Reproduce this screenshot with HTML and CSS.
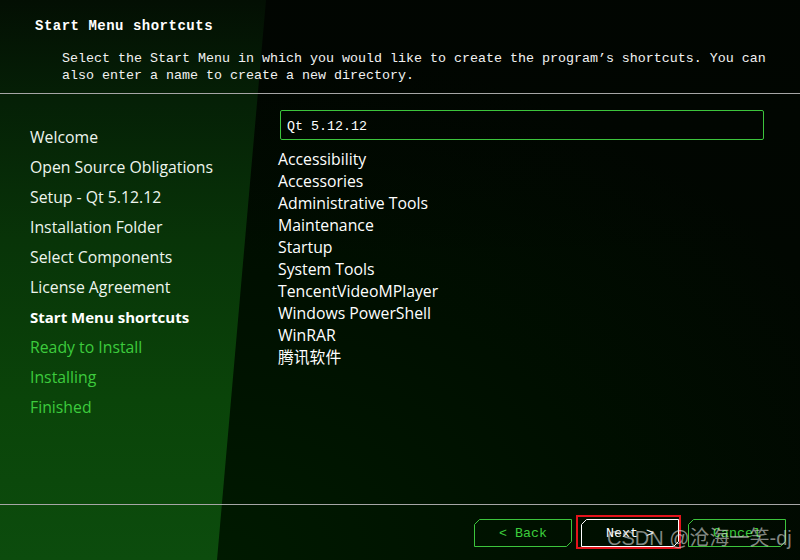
FILE: index.html
```html
<!DOCTYPE html>
<html lang="en">
<head>
<meta charset="utf-8">
<title>Qt Setup - Start Menu shortcuts</title>
<link rel="stylesheet" href="styles.css">
</head>
<body>
<div class="wizard">
  <header class="head">
    <h1 class="title">Start Menu shortcuts</h1>
    <p class="desc">Select the Start Menu in which you would like to create the program’s shortcuts. You can<br>also enter a name to create a new directory.</p>
  </header>
  <div class="main">
    <nav class="steps">
      <ul>
        <li class="done">Welcome</li>
        <li class="done">Open Source Obligations</li>
        <li class="done">Setup - Qt 5.12.12</li>
        <li class="done">Installation Folder</li>
        <li class="done">Select Components</li>
        <li class="done">License Agreement</li>
        <li class="current">Start Menu shortcuts</li>
        <li class="todo">Ready to Install</li>
        <li class="todo">Installing</li>
        <li class="todo">Finished</li>
      </ul>
    </nav>
    <section class="content">
      <input class="dir" type="text" value="Qt 5.12.12">
      <ul class="list">
        <li>Accessibility</li>
        <li>Accessories</li>
        <li>Administrative Tools</li>
        <li>Maintenance</li>
        <li>Startup</li>
        <li>System Tools</li>
        <li>TencentVideoMPlayer</li>
        <li>Windows PowerShell</li>
        <li>WinRAR</li>
        <li>腾讯软件</li>
      </ul>
    </section>
  </div>
  <footer class="foot">
    <button class="btn btn-green" type="button">
      <svg class="frame" viewBox="0 0 98 28" preserveAspectRatio="none"><polygon points="5.5,0.5 97.5,0.5 97.5,22.5 92.5,27.5 0.5,27.5 0.5,5.5"/></svg>
      <span>&lt; Back</span>
    </button>
    <button class="btn btn-white highlighted" type="button">
      <svg class="frame" viewBox="0 0 98 28" preserveAspectRatio="none"><polygon points="5.5,0.5 97.5,0.5 97.5,22.5 92.5,27.5 0.5,27.5 0.5,5.5"/></svg>
      <span>Next &gt;</span>
    </button>
    <button class="btn btn-green" type="button">
      <svg class="frame" viewBox="0 0 98 28" preserveAspectRatio="none"><polygon points="5.5,0.5 97.5,0.5 97.5,22.5 92.5,27.5 0.5,27.5 0.5,5.5"/></svg>
      <span>Cancel</span>
    </button>
  </footer>
  <div class="watermark">CSDN @沧海一笑-dj</div>
</div>
</body>
</html>
```

FILE: styles.css
```css
* { box-sizing: border-box; }

html, body {
  margin: 0;
  padding: 0;
  width: 800px;
  height: 560px;
  overflow: hidden;
  background: #000800;
}

.wizard {
  position: relative;
  width: 800px;
  height: 560px;
  display: flex;
  flex-direction: column;
  color: #ffffff;
  background:
    linear-gradient(to bottom, rgba(1, 5, 1, 0.9) 0, rgba(1, 5, 1, 0) 260px),
    radial-gradient(ellipse 700px 520px at 220px 560px, #001a00 0, #000f00 55%, #010701 100%);
  overflow: hidden;
}

.wizard::before {
  content: "";
  position: absolute;
  left: 0;
  top: 0;
  width: 270px;
  height: 560px;
  clip-path: polygon(0 0, 266px 0, 217px 560px, 0 560px);
  background: linear-gradient(to bottom, #030f03 0, #052006 100px, #083408 240px, #0a4409 400px, #0c4c0d 560px);
}

.head,
.main,
.foot {
  position: relative;
}

.head {
  height: 94px;
  padding: 17px 0 0 35px;
  border-bottom: 1px solid #a6a6a6;
  flex: none;
}

.title {
  margin: 0;
  font-family: "Liberation Mono", "DejaVu Sans Mono", monospace;
  font-weight: bold;
  font-size: 14px;
  letter-spacing: 0.5px;
  line-height: 18px;
  color: #ffffff;
}

.desc {
  margin: 15px 0 0 27px;
  font-family: "Liberation Mono", "DejaVu Sans Mono", monospace;
  font-size: 13.33px;
  line-height: 17px;
  white-space: nowrap;
  color: #f2f2f2;
}

.main {
  display: flex;
  height: 411px;
  flex: none;
  border-bottom: 1px solid #a6a6a6;
}

.steps {
  width: 278px;
  flex: none;
  padding: 28px 0 0 30px;
}

.steps ul,
.list {
  list-style: none;
  margin: 0;
  padding: 0;
}

.steps li {
  font-family: "Open Sans", "Noto Sans", sans-serif;
  font-size: 15.8px;
  line-height: 30px;
  white-space: nowrap;
}

.steps .done { color: #eef5ee; }
.steps .current { color: #ffffff; font-weight: bold; font-size: 15px; }
.steps .todo { color: #3dcb3d; }

.content {
  flex: 1;
  padding: 16px 36px 0 0;
  display: flex;
  flex-direction: column;
  align-items: flex-start;
}

.dir {
  width: 484px;
  height: 30px;
  margin: 0 0 8px 2px;
  padding: 2px 6px 0;
  border: 1px solid #3cc43c;
  border-radius: 2px;
  background: transparent;
  color: #ffffff;
  font-family: "Liberation Mono", "DejaVu Sans Mono", monospace;
  font-size: 13.33px;
  outline: none;
}

.list li {
  font-family: "Open Sans", "Noto Sans", "Noto Sans CJK SC", sans-serif;
  font-size: 15.8px;
  line-height: 22px;
  color: #ffffff;
  white-space: nowrap;
}

.foot {
  flex: 1;
  display: flex;
  justify-content: flex-end;
  align-items: flex-start;
  gap: 9px;
  padding: 14px 14px 0 0;
}

.btn {
  position: relative;
  width: 98px;
  height: 28px;
  padding: 2px 0 0;
  margin: 0;
  border: none;
  background: transparent;
  font-family: "Liberation Mono", "DejaVu Sans Mono", monospace;
  font-size: 13.33px;
  line-height: 26px;
  text-align: center;
}

.btn span { position: relative; }

.frame {
  position: absolute;
  left: 0;
  top: 0;
  width: 98px;
  height: 28px;
}

.frame polygon {
  fill: none;
  stroke-width: 1;
}

.btn-green { color: #3ccd3c; }
.btn-green .frame polygon { stroke: #3cc43c; }

.btn-white { color: #ffffff; }
.btn-white .frame polygon { stroke: #ffffff; }

.highlighted::after {
  content: "";
  position: absolute;
  top: -4px;
  left: -5px;
  right: -2px;
  bottom: -2px;
  border: 2px solid #e3141c;
}

.watermark {
  position: absolute;
  left: 607px;
  top: 526px;
  font-family: "Liberation Sans", "Noto Sans CJK SC", sans-serif;
  font-size: 20px;
  line-height: 24px;
  color: rgba(220, 220, 220, 0.6);
  white-space: nowrap;
}
```
